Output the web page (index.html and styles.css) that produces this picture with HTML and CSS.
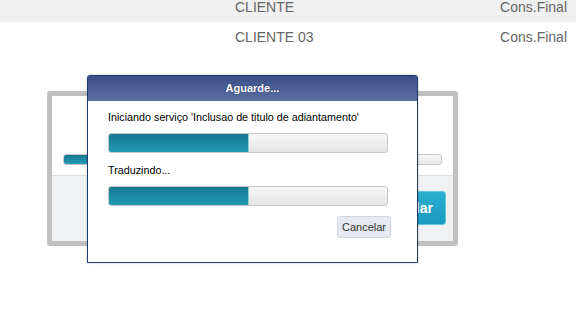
FILE: index.html
```html
<!DOCTYPE html>
<html lang="pt">
<head>
    <meta charset="UTF-8">
    <title>Aguarde</title>
    <link rel="stylesheet" href="styles.css">
</head>
<body>
    <div class="grid">
        <div class="grid-row first">
            <span class="col-name">CLIENTE</span>
            <span class="col-type">Cons.Final</span>
        </div>
        <div class="grid-row">
            <span class="col-name">CLIENTE 03</span>
            <span class="col-type">Cons.Final</span>
        </div>
    </div>

    <div class="panel">
        <div class="panel-top">
            <div class="panel-bar"><div class="panel-fill"></div></div>
        </div>
        <div class="panel-bottom">
            <button class="panel-btn">Cancelar</button>
        </div>
    </div>

    <div class="dialog">
        <div class="dialog-title">Aguarde...</div>
        <div class="dialog-body">
            <p class="step">Iniciando serviço 'Inclusao de titulo de adiantamento'</p>
            <div class="bar"><div class="fill" style="width: 50%"></div></div>
            <p class="step">Traduzindo...</p>
            <div class="bar"><div class="fill" style="width: 50%"></div></div>
            <div class="actions">
                <button class="cancel-btn">Cancelar</button>
            </div>
        </div>
    </div>
</body>
</html>
```

FILE: styles.css
```css
body {
    margin: 0;
    font-family: "Liberation Sans", Arial, sans-serif;
    background: #fff;
    color: #000;
    position: relative;
    height: 320px;
    overflow: hidden;
}
.grid-row {
    display: flex;
    align-items: center;
    height: 30px;
    font-size: 14px;
    color: #666;
}
.grid-row.first {
    margin-top: -8px;
    background: #f0f0f0;
}
.col-name {
    padding-left: 235px;
}
.col-type {
    margin-left: auto;
    padding-right: 9px;
}

/* background window */
.panel {
    margin: 39px 0 0 47px;
    width: 401px;
    height: 145px;
    border: 5px solid #c0c0c0;
    border-radius: 3px;
    display: flex;
    flex-direction: column;
}
.panel-top {
    height: 79px;
    background: #fff;
    padding: 58px 11px 0;
    box-sizing: border-box;
}
.panel-bar {
    height: 9px;
    border: 1px solid #c8c8c8;
    border-radius: 3px;
    background: linear-gradient(#f6f6f6, #e6e6e6);
    overflow: hidden;
}
.panel-fill {
    width: 40%;
    height: 100%;
    background: linear-gradient(#17788f, #2199b5);
}
.panel-bottom {
    flex: 1;
    background: #f0f1f3;
    border-top: 1px solid #dcdcdc;
    display: flex;
    justify-content: flex-end;
    align-items: flex-start;
    padding: 15px 7px 0 0;
}
.panel-btn {
    width: 80px;
    height: 34px;
    border: 1px solid #5cc8e4;
    border-radius: 3px;
    background: linear-gradient(#2aaed0, #1a9bc2);
    color: #fff;
    font: bold 14px "Liberation Sans", Arial, sans-serif;
    text-align: right;
    padding-right: 12px;
}

/* modal */
.dialog {
    position: absolute;
    left: 87px;
    top: 75px;
    width: 329px;
    height: 186px;
    border: 1px solid #1d3b6b;
    border-radius: 3px 3px 0 0;
    background: #fff;
    box-shadow: 0 0 2px rgba(0, 0, 0, 0.3);
}
.dialog-title {
    height: 25px;
    line-height: 25px;
    text-align: center;
    color: #fff;
    font-weight: bold;
    font-size: 11px;
    text-shadow: 0 0 1px #1d2c55;
    background: linear-gradient(#3b4e87, #5b6fa2);
}
.dialog-body {
    padding: 9px 0 0 20px;
}
.step {
    margin: 0;
    font-size: 10.75px;
    line-height: 14px;
}
.bar {
    width: 278px;
    height: 18px;
    margin: 9px 0 10px;
    border: 1px solid #c8c8c8;
    border-radius: 3px;
    background: linear-gradient(#f7f7f7, #e4e4e4);
    overflow: hidden;
}
.fill {
    height: 100%;
    background: linear-gradient(#17788f, #2199b5);
    border-right: 1px solid #9cc;
}
.actions {
    display: flex;
    justify-content: flex-end;
    padding-right: 26px;
    margin-top: 6px;
}
.cancel-btn {
    height: 22px;
    padding: 0 4px;
    border: 1px solid #d2d6de;
    border-radius: 3px;
    background: #e6e9ef;
    color: #333;
    font: 11px "Liberation Sans", Arial, sans-serif;
}
```
